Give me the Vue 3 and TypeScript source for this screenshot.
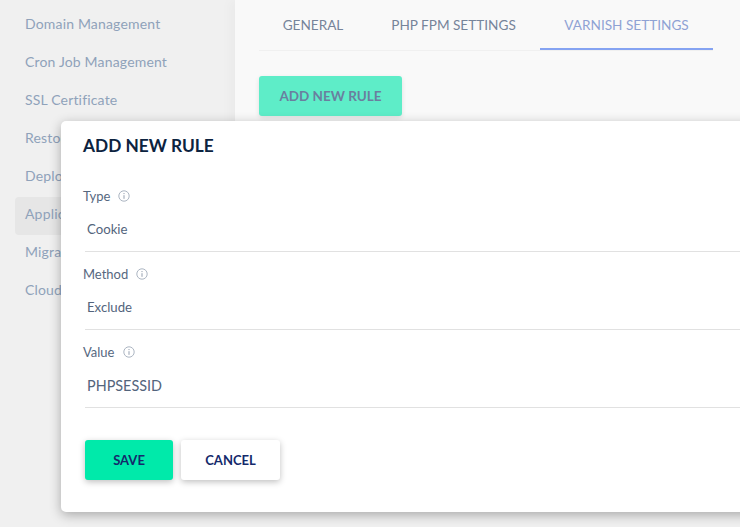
<script setup lang="ts">
const menu: { label: string; active?: boolean }[] = [
  { label: 'Domain Management' },
  { label: 'Cron Job Management' },
  { label: 'SSL Certificate' },
  { label: 'Restore' },
  { label: 'Deployment' },
  { label: 'Application Settings', active: true },
  { label: 'Migration' },
  { label: 'Cloudflare' },
]
const tabs = [
  { label: 'GENERAL', width: 108 },
  { label: 'PHP FPM SETTINGS', width: 173 },
  { label: 'VARNISH SETTINGS', width: 173, active: true },
]
const fields = [
  { label: 'Type', value: 'Cookie' },
  { label: 'Method', value: 'Exclude' },
  { label: 'Value', value: 'PHPSESSID', large: true },
]
</script>

<template>
  <div class="page">
    <aside class="sidebar">
      <div v-for="m in menu" :key="m.label" class="item" :class="{ active: m.active }">{{ m.label }}</div>
    </aside>
    <main class="main">
      <nav class="tabs">
        <div
          v-for="t in tabs"
          :key="t.label"
          class="tab"
          :class="{ on: t.active }"
          :style="{ width: t.width + 'px' }"
        >{{ t.label }}</div>
      </nav>
      <button class="add">ADD NEW RULE</button>
    </main>
    <section class="modal">
      <h2>ADD NEW RULE</h2>
      <div v-for="f in fields" :key="f.label" class="field">
        <label>
          {{ f.label }}
          <svg width="12" height="12" viewBox="0 0 12 12" fill="none">
            <circle cx="6" cy="6" r="5.2" stroke="#a3adbb" stroke-width="0.9" />
            <path d="M6 5.2V8.8" stroke="#8994a6" stroke-width="0.9" />
            <path d="M6 3V4.1" stroke="#8994a6" stroke-width="0.9" />
          </svg>
        </label>
        <div class="input" :class="{ large: f.large }">{{ f.value }}</div>
      </div>
      <div class="actions">
        <button class="save">SAVE</button>
        <button class="cancel">CANCEL</button>
      </div>
    </section>
  </div>
</template>

<style>
html, body { margin: 0; }
</style>

<style scoped>
.page {
  position: relative;
  display: flex;
  align-items: flex-start;
  width: 740px;
  height: 527px;
  overflow: hidden;
  background: #f0f0f0;
  font-family: Lato, "Liberation Sans", sans-serif;
}
.sidebar {
  box-sizing: border-box;
  flex: 0 0 235px;
  padding: 7px 0 0 15px;
}
.item {
  height: 38px;
  line-height: 34px;
  padding-left: 10px;
  font-size: 14px;
  letter-spacing: 0.17px;
  color: #8fa2ba;
  border-radius: 4px;
}
.item.active { background: #e6e6e6; }
.main {
  flex: 1;
  height: 300px;
  padding: 0 27px 0 24px;
  background: #f9f9f9;
  box-shadow: -6px 0 10px rgba(0, 0, 0, 0.025);
}
.tabs {
  display: flex;
  height: 51px;
  box-sizing: border-box;
  border-bottom: 1px solid #f0f0f0;
}
.tab {
  height: 50px;
  box-sizing: border-box;
  padding-top: 17px;
  text-align: center;
  font-size: 13.6px;
  line-height: 17px;
  color: #76849a;
}
.tab.on {
  color: #8fa2d4;
  border-bottom: 2px solid #85a3f2;
}
.add {
  display: block;
  margin-top: 25px;
  width: 143px;
  height: 40px;
  border: 0;
  border-radius: 3px;
  background: #5eedc8;
  color: #6a7f9f;
  font: 700 13.5px Lato, "Liberation Sans", sans-serif;
  box-shadow: 0 2px 5px rgba(0, 0, 0, 0.1);
}
.modal {
  position: absolute;
  left: 61px;
  top: 121px;
  box-sizing: border-box;
  width: 760px;
  height: 391px;
  padding: 15px 0 0 22px;
  background: #fff;
  border-radius: 5px;
  box-shadow: 0 3px 12px rgba(0, 0, 0, 0.3);
}
h2 {
  margin: 0 0 32px;
  font-size: 17.3px;
  line-height: 20px;
  font-weight: 700;
  color: #0c2340;
}
.field { height: 78px; }
label {
  display: flex;
  align-items: center;
  gap: 8px;
  height: 16px;
  font-size: 13px;
  color: #56687f;
}
.input {
  box-sizing: border-box;
  margin: 1px 0 0 2px;
  height: 47px;
  padding: 0 2px;
  line-height: 48px;
  font-size: 13.2px;
  color: #53647c;
  border-bottom: 1px solid #e1e1e1;
}
.input.large { font-size: 14.4px; line-height: 50px; }
.actions {
  display: flex;
  gap: 8px;
  margin: 18px 0 0 2px;
}
button { cursor: pointer; }
.save, .cancel {
  height: 40px;
  border: 0;
  border-radius: 3px;
  color: #14296b;
  font: 700 13px Lato, "Liberation Sans", sans-serif;
  box-shadow: 0 2px 6px rgba(0, 0, 0, 0.25);
}
.save { width: 88px; background: #00eaaa; }
.cancel { width: 99px; background: #fff; }
</style>
